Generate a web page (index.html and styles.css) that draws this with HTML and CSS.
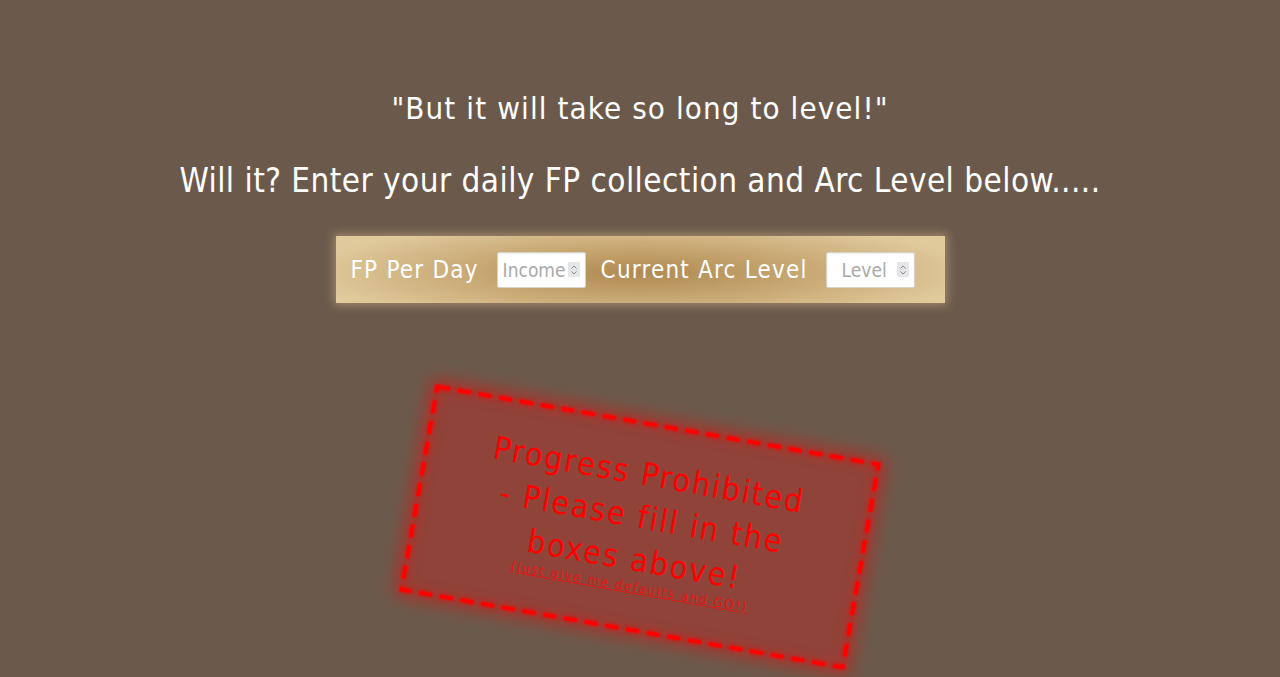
FILE: index.html
```html
<!DOCTYPE html>
<html lang="en">
<head>
<meta charset="utf-8">
<title>Arc Level Calculator</title>
<link rel="stylesheet" href="styles.css">
</head>
<body>
<main class="page">
  <h1 class="title">"But it will take so long to level!"</h1>
  <h2 class="subtitle">Will it? Enter your daily FP collection and Arc Level below.....</h2>
  <form class="panel">
    <span class="panel-label">FP Per Day</span>
    <label class="field field-income">
      <input class="field-input" type="text" placeholder="Income">
      <span class="spin"><svg viewBox="0 0 8 12" width="8" height="12"><path d="M1.5 4.5 4 2 6.5 4.5M1.5 7.5 4 10 6.5 7.5" fill="none" stroke="#8a8a8a" stroke-width="1"/></svg></span>
    </label>
    <span class="panel-label">Current Arc Level</span>
    <label class="field field-level">
      <input class="field-input" type="text" placeholder="Level">
      <span class="spin"><svg viewBox="0 0 8 12" width="8" height="12"><path d="M1.5 4.5 4 2 6.5 4.5M1.5 7.5 4 10 6.5 7.5" fill="none" stroke="#8a8a8a" stroke-width="1"/></svg></span>
    </label>
  </form>
  <div class="stamp">
    <svg class="stamp-border" viewBox="0 0 452 210" width="452" height="210" aria-hidden="true"><rect x="2" y="2" width="448" height="206" fill="none" stroke="#ff0000" stroke-width="4" stroke-dasharray="13 8"/></svg>
    <p class="stamp-text">Progress Prohibited - Please fill in the boxes above!</p>
    <a class="stamp-link" href="#">(Just give me defaults and GO!)</a>
  </div>
</main>
</body>
</html>
```

FILE: styles.css
```css
html, body {
  margin: 0;
  padding: 0;
  height: 100%;
  overflow: hidden;
}
body {
  background: #6b5a4c;
  font-family: "DejaVu Sans", sans-serif;
  font-stretch: condensed;
  color: #fff;
}
.page {
  display: flex;
  flex-direction: column;
  align-items: center;
  padding-top: 88px;
}
.title {
  margin: 0;
  font-size: 31px;
  font-weight: normal;
  letter-spacing: 1.1px;
  line-height: 40px;
}
.subtitle {
  margin: 33px 0 0;
  font-size: 33px;
  font-weight: normal;
  letter-spacing: 0.45px;
  line-height: 40px;
}
.panel {
  margin-top: 35px;
  width: 609px;
  height: 67px;
  box-sizing: border-box;
  display: flex;
  align-items: center;
  padding: 0 15px;
  background: radial-gradient(ellipse 55% 80% at 50% 55%, #b08a52 0%, #c6a570 45%, #e0ca9c 100%);
  box-shadow: 0 0 9px 2px rgba(220, 190, 140, 0.5);
}
.panel-label {
  font-size: 24px;
  letter-spacing: 1.2px;
  color: #fff;
  white-space: nowrap;
}
.field {
  display: flex;
  align-items: center;
  height: 36px;
  box-sizing: border-box;
  background: #fff;
  border: 1px solid #d8d2c8;
  border-radius: 2px;
  padding: 0 5px 0 5px;
  box-shadow: inset 0 1px 2px rgba(0, 0, 0, 0.08);
}
.field-income {
  width: 89px;
  margin-left: 18px;
  margin-right: 15px;
}
.field-level {
  width: 89px;
  margin-left: 18px;
}
.field-input {
  border: 0;
  outline: none;
  width: 100%;
  min-width: 0;
  padding: 0;
  font-family: inherit;
  font-stretch: condensed;
  font-size: 19px;
  color: #444;
  background: transparent;
}
.field-level .field-input {
  text-align: center;
}
.field-input::placeholder {
  color: #a9a9a9;
}
.spin {
  flex: none;
  display: flex;
  align-items: center;
  justify-content: center;
  width: 12px;
  height: 15px;
  background: #e5e5ea;
  border-radius: 1px;
}
.stamp {
  position: relative;
  margin-top: 119px;
  width: 452px;
  height: 210px;
  box-sizing: border-box;
  transform: rotate(10deg);
  background: rgba(255, 0, 0, 0.25);
  box-shadow: 0 0 18px 5px rgba(255, 0, 0, 0.45), inset 0 0 14px 3px rgba(255, 0, 0, 0.3);
  display: flex;
  flex-direction: column;
  align-items: center;
  padding: 31px 60px 0;
  color: #ff0000;
  text-align: center;
}
.stamp-border {
  position: absolute;
  left: 0;
  top: 0;
  filter: drop-shadow(0 0 2px rgba(255, 0, 0, 0.8));
}
.stamp-text {
  margin: 0;
  font-size: 32px;
  letter-spacing: 2px;
  line-height: 43px;
}
.stamp-link {
  margin-top: -2px;
  font-size: 13px;
  letter-spacing: 1.8px;
  color: #e81414;
  text-decoration: underline;
}
```
